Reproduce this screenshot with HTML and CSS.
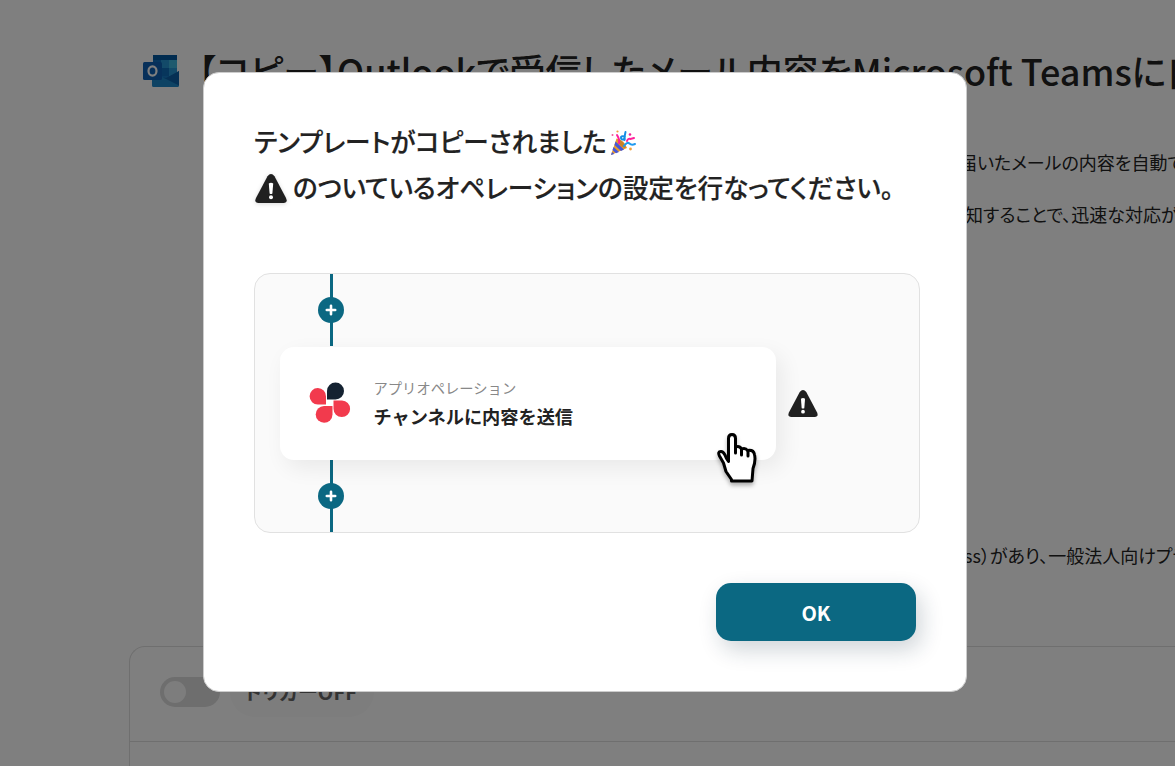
FILE: index.html
```html
<!DOCTYPE html>
<html lang="ja">
<head>
<meta charset="utf-8">
<title>テンプレート</title>
<link rel="stylesheet" href="styles.css">
</head>
<body>
<main class="page">
  <header class="title-row">
    <svg class="outlook" viewBox="0 0 36 34" width="36" height="34">
      <rect x="10" y="1" width="24" height="30" rx="1.5" fill="#1478c4"/>
      <path d="M10 6h8v8h-8z" fill="#0f6cbd"/><path d="M18 6h8v8h-8z" fill="#2795d2"/><path d="M26 6h8v8h-8z" fill="#3fb4dc"/>
      <path d="M10 14h8v8h-8z" fill="#0a4d91"/><path d="M18 14h8v8h-8z" fill="#0f6cb8"/><path d="M26 14h8v8h-8z" fill="#2795d2"/>
      <path d="M10 1h24v5H10z" fill="#0358a0"/>
      <path d="M9 17l14 8 13-8v14.500a1.500 1.500 0 0 1-1.500 1.500H10.500A1.500 1.500 0 0 1 9 31.500z" fill="#1c86c8"/>
      <path d="M36 17v14.500L20 23.500l3 .5z" fill="#0d60a8"/>
      <rect x="0" y="8" width="19" height="18" rx="1.500" fill="#0f60b4"/>
      <ellipse cx="9.500" cy="17" rx="4" ry="4.600" fill="none" stroke="#fff" stroke-width="2.200"/>
    </svg>
    <h1 class="title">【コピー】Outlookで受信したメール内容をMicrosoft Teamsに自</h1>
  </header>
  <section class="description">
    <p class="line line-first">届いたメールの内容を自動で</p>
    <p class="line line-second">知することで、迅速な対応が</p>
    <p class="line line-third">ss）があり、一般法人向けプラ</p>
  </section>
  <section class="flow-panel">
    <div class="trigger-row">
      <span class="toggle"><span class="knob"></span></span>
      <span class="trigger-label">トリガーOFF</span>
    </div>
  </section>
</main>
<div class="overlay"></div>
<div class="modal">
  <h2 class="heading">
    <span class="heading-line"><span class="copied">テンプレートがコピーされました</span>
      <svg class="party" viewBox="0 0 26 26" width="26" height="26">
        <path d="M1 25L6.500 8.500Q14 9.500 17 18z" fill="#e89b2c"/>
        <path d="M5.500 11.500l8.500 8-3 1.500-6.500-6zM3.500 17l5.500 5-3 1.200-3.500-3.200zM2 22l2.300 2L1 25z" fill="#4657d9"/>
        <ellipse cx="11.700" cy="13.800" rx="2" ry="5.500" transform="rotate(-43 11.700 13.800)" fill="#c9812a"/>
        <g fill="none" stroke-width="2" stroke-linecap="round">
          <path d="M9 13q1-3-2-8" stroke="#ff1f9b"/>
          <path d="M15.500 2q-1 3.500-1 8" stroke="#168ee5"/>
          <path d="M14.500 6.500q-4-1-3.500 1.500t3.500 1" stroke="#168ee5"/>
          <path d="M14 16q3-4.500 5.500-2.500 2 2 5.500 .5" stroke="#209bf0"/>
          <path d="M17 11q1-3 3.500-2l3.500-1" stroke="#ff1f9b"/>
        </g>
        <circle cx="2.500" cy="5" r="1" fill="#f0579a"/><circle cx="7.500" cy="1.500" r="1.100" fill="#f2a23a"/><circle cx="20" cy="4.500" r="1.300" fill="#ed249a"/><circle cx="20.500" cy="19" r="1.400" fill="#f2a23a"/>
      </svg>
    </span>
    <span class="heading-line heading-second">
      <svg class="warn" viewBox="0 0 32 29" width="32" height="29">
        <path d="M12.500 2.200Q16-2 19.500 2.200L31 24q2.200 4.800-2.500 5h-25Q-1.200 28.800 1 24z" fill="#202020"/>
        <path d="M13.800 9.500q2.200-1.600 4.400 0l-.8 10q-1.400 1-2.800 0z" fill="#fff"/><circle cx="16" cy="23.300" r="2" fill="#fff"/>
      </svg>
      <span class="instruction">のついているオペレーションの設定を行なってください。</span>
    </span>
  </h2>
  <div class="preview">
    <div class="connector">
      <svg class="plus" viewBox="0 0 26 26" width="26" height="26"><circle cx="13" cy="13" r="13" fill="#0b6882"/><path d="M13 8.800v8.400M8.800 13h8.400" stroke="#fff" stroke-width="2.600" stroke-linecap="round"/></svg>
    </div>
    <div class="operation-row">
      <div class="operation">
        <svg class="app-logo" viewBox="0 0 42 42" width="42" height="42">
          <path d="M18 17.500V9a8.500 8.500 0 1 1 8.500 8.500z" fill="#142231"/>
          <path d="M17 22.500H9a8.200 8.200 0 1 1 8-8z" fill="#f23a4d"/>
          <path d="M24.500 18.500H33a8.300 8.300 0 1 1-8.500 8.300z" fill="#f23a4d"/>
          <path d="M23.500 24v8.500a8.400 8.400 0 1 1-8.500-8.500z" fill="#f23a4d"/>
        </svg>
        <div class="operation-text">
          <span class="operation-kind">アプリオペレーション</span>
          <span class="operation-name">チャンネルに内容を送信</span>
        </div>
      </div>
      <svg class="warn-small" viewBox="0 0 32 29" width="30" height="27">
        <path d="M12.500 2.200Q16-2 19.500 2.200L31 24q2.200 4.800-2.500 5h-25Q-1.200 28.800 1 24z" fill="#202020"/>
        <path d="M13.800 9.500q2.200-1.600 4.400 0l-.8 10q-1.400 1-2.800 0z" fill="#fff"/><circle cx="16" cy="23.300" r="2" fill="#fff"/>
      </svg>
    </div>
    <div class="connector">
      <svg class="plus" viewBox="0 0 26 26" width="26" height="26"><circle cx="13" cy="13" r="13" fill="#0b6882"/><path d="M13 8.800v8.400M8.800 13h8.400" stroke="#fff" stroke-width="2.600" stroke-linecap="round"/></svg>
    </div>
    <svg class="hand" viewBox="0 0 40 50" width="40" height="50">
      <path d="M11.500 28.500V5.500q0-4 3.500-4t3.500 4v8.500q4-1.500 6 2 4-1.500 6 1.500 6-1 7 4 1.500 6-1.500 14l-1 12.500H14.500V46.500L9 38.500 6.500 30 2.500 23q-2-4 1-4.500 2.500-.5 4.500 3.500 1 3 3.500 6.500z" fill="#fff" stroke="#000" stroke-width="3" stroke-linejoin="round"/>
      <path d="M18.500 13v7M24.500 16v6M31 18v5" fill="none" stroke="#000" stroke-width="3" stroke-linecap="round"/>
    </svg>
  </div>
  <div class="actions"><button class="ok">OK</button></div>
</div>
</body>
</html>
```
FILE: styles.css
```css
* { box-sizing: border-box; }
body {
  margin: 0;
  width: 1175px;
  height: 766px;
  overflow: hidden;
  position: relative;
  background: #fff;
  color: #222;
  font-family: "Noto Sans CJK JP", sans-serif;
  font-feature-settings: "palt";
}
h1, h2, p { margin: 0; }
svg { display: block; flex: none; }

.page { display: flex; flex-direction: column; height: 766px; overflow: hidden; }
.title-row { display: flex; height: 110px; flex: none; padding: 54px 0 0 143px; }
.title { margin: -11px 0 0 19px; font-size: 36px; line-height: 54px; font-weight: 500; white-space: nowrap; letter-spacing: -0.03px; }
.description { height: 536px; flex: none; padding: 39px 0 0 959px; }
.line { font-size: 18px; line-height: 26px; white-space: nowrap; }
.line-second { margin-top: 26px; padding-left: 6px; }
.line-third { margin-top: 315px; padding-left: 5px; }
.flow-panel { flex: none; height: 130px; width: 1100px; margin-left: 129px; border: 1px solid #dedede; border-width: 1px 0 0 1px; border-radius: 16px 0 0 0; }
.trigger-row { display: flex; align-items: center; height: 95px; padding: 0 0 5px 30px; border-bottom: 1px solid #dedede; }
.toggle { display: flex; align-items: center; width: 60px; height: 30px; padding: 4px; border-radius: 15px; background: #dcdcdc; }
.knob { width: 22px; height: 22px; border-radius: 50%; background: #fafafa; }
.trigger-label { margin-left: 10px; width: 144px; height: 50px; border-radius: 25px; background: #fafafa; color: #666; text-align: center; font-size: 20px; line-height: 50px; font-weight: 700; letter-spacing: 0.2px; text-indent: -2px; }

.overlay { position: absolute; inset: 0; background: rgba(0, 0, 0, 0.5); }
.modal {
  position: absolute;
  left: 203px;
  top: 72px;
  width: 764px;
  height: 620px;
  padding: 45px 46px 50px 50px;
  border: 1px solid #ccc;
  border-radius: 16px;
  background: #fff;
}
.heading { height: 155px; font-size: 25.6px; line-height: 46px; font-weight: 500; white-space: nowrap; -webkit-text-stroke: 0.2px #222; }
.heading-line { display: flex; align-items: center; height: 46px; }
.party { margin: 4px 0 0 3px; }
.warn { margin: 3px 6px 0 1px; filter: drop-shadow(0 1px 2px rgba(0, 0, 0, 0.15)); }
.preview { position: relative; width: 666px; height: 260px; border: 1px solid #e1e1e1; border-radius: 16px; background: #fafafa; }
.connector { display: flex; align-items: center; justify-content: center; width: 26px; height: 72px; margin-left: 63px; background: linear-gradient(#0b6882, #0b6882) 11.5px 0 / 3px 100% no-repeat; }
.operation-row { display: flex; align-items: center; height: 114px; padding-left: 25px; }
.operation { display: flex; align-items: center; width: 496px; height: 113px; margin-top: 1px; padding-left: 29px; border-radius: 14px; background: #fff; box-shadow: 6px 8px 22px rgba(0, 0, 0, 0.07); }
.app-logo { margin-top: -2px; }
.operation-text { display: flex; flex-direction: column; margin: -2px 0 0 22.5px; white-space: nowrap; font-feature-settings: normal; }
.operation-kind { color: #888; font-size: 14.3px; line-height: 28px; }
.operation-name { font-size: 18.2px; line-height: 29px; font-weight: 700; }
.warn-small { margin-left: 11.5px; }
.hand { position: absolute; left: 462px; top: 159px; filter: drop-shadow(0 3px 2px rgba(0, 0, 0, 0.3)); }
.actions { display: flex; justify-content: flex-end; padding: 50px 4px 0 0; }
.ok { width: 200px; height: 58px; padding: 1px 0 0; border: 0; border-radius: 15px; background: #0b6882; box-shadow: 5px 9px 22px rgba(20, 45, 65, 0.2); color: #fff; font: 700 20px "Noto Sans CJK JP", sans-serif; }
```
